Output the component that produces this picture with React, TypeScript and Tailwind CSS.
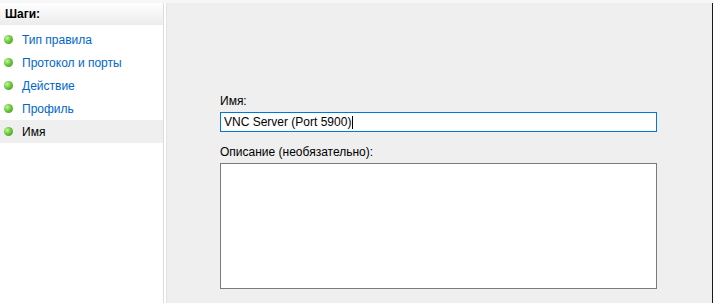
import React from "react";

const steps = [
  { label: "Тип правила", active: false },
  { label: "Протокол и порты", active: false },
  { label: "Действие", active: false },
  { label: "Профиль", active: false },
  { label: "Имя", active: true },
];

const Bullet = () => (
  <span className="inline-block h-[9px] w-[9px] shrink-0 rounded-full bg-[radial-gradient(circle_at_35%_35%,#c8f5a0_0%,#6cc83c_45%,#2f8f1a_100%)]" />
);

export default function App() {
  return (
    <div className="flex h-[303px] w-[713px] flex-col overflow-hidden bg-[#f7f7f7] font-['Liberation_Sans',Arial,sans-serif] text-[12px]">
      <div className="h-[3px] shrink-0 bg-[#f7f7f7]" />
      <div className="flex min-h-0 flex-1">
        {/* Steps sidebar */}
        <div className="flex w-[163px] shrink-0 flex-col bg-white">
          <div className="flex h-[22px] items-center bg-gradient-to-b from-white to-[#ececec] pl-[5px] font-bold text-black">
            Шаги:
          </div>
          <div className="flex flex-col pt-[3px]">
            {steps.map((s) => (
              <div
                key={s.label}
                className={`flex h-[23px] items-center gap-[9px] pl-[4px] ${
                  s.active ? "bg-[#efefef] text-black" : "text-[#0066cc]"
                }`}
              >
                <Bullet />
                <span>{s.label}</span>
              </div>
            ))}
          </div>
        </div>
        <div className="w-px shrink-0 bg-[#dcdcdc]" />
        <div className="w-[2px] shrink-0 bg-white" />
        <div className="w-px shrink-0 bg-[#e3e3e3]" />

        {/* Main panel */}
        <div className="flex min-w-0 flex-1 flex-col bg-[#efefef] pl-[53px] pt-[91px]">
          <div className="text-black leading-[14px]">Имя:</div>
          <div className="mt-[4px] flex h-[20px] w-[437px] items-center border border-[#0078d7] bg-white pl-[3px] text-black">
            <span>VNC Server (Port 5900)</span>
            <span className="ml-px inline-block h-[13px] w-px bg-black" />
          </div>
          <div className="mt-[13px] text-black leading-[14px]">Описание (необязательно):</div>
          <div className="mt-[4px] h-[126px] w-[437px] border border-[#7a7a7a] bg-white" />
        </div>
        <div className="w-px shrink-0 bg-[#1a1a1a]" />
      </div>
    </div>
  );
}
